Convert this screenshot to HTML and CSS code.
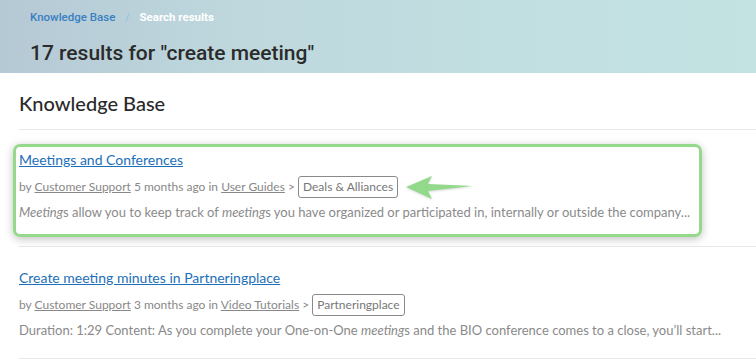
FILE: index.html
```html
<!DOCTYPE html>
<html lang="en">
<head>
  <meta charset="UTF-8" />
  <title>Search results</title>
  <link rel="stylesheet" href="styles.css">
</head>
<body>
  <header class="hero">
    <nav class="crumbs">
      <a href="#">Knowledge Base</a>
      <span class="sep">/</span>
      <span class="current">Search results</span>
    </nav>
    <h1>17 results for "create meeting"</h1>
  </header>

  <main class="content">
    <h2>Knowledge Base</h2>

    <section class="result">
      <div class="marked">
        <a class="title" href="#">Meetings and Conferences</a>
        <div class="meta">
          by <a href="#">Customer Support</a> 5 months ago in <a href="#">User Guides</a> &gt;
          <span class="tag">Deals &amp; Alliances</span>
          <svg class="arrow" width="72" height="26" viewBox="0 0 72 26">
            <path d="M1 12 L27 1 L23 9 L68 11 L23 16 L27 24 Z" fill="#93d98b" />
          </svg>
        </div>
        <p class="excerpt"><em>Meeting</em>s allow you to keep track of <em>meeting</em>s you have organized or participated in, internally or outside the company...</p>
      </div>
    </section>

    <section class="result">
      <a class="title" href="#">Create meeting minutes in Partneringplace</a>
      <div class="meta">
        by <a href="#">Customer Support</a> 3 months ago in <a href="#">Video Tutorials</a> &gt;
        <span class="tag">Partneringplace</span>
      </div>
      <p class="excerpt">Duration: 1:29 Content: As you complete your One-on-One <em>meeting</em>s and the BIO conference comes to a close, you’ll start...</p>
    </section>
  </main>
</body>
</html>
```

FILE: styles.css
```css
* {
  box-sizing: border-box;
}

body {
  margin: 0;
  font-family: Lato, sans-serif;
  background: #fff;
  color: #333;
}

/* Header */
.hero {
  height: 73px;
  padding: 10px 30px 0;
  background: linear-gradient(90deg, #b5c9d5 0%, #bfd9de 35%, #c3e3e3 100%);
}

.crumbs {
  font-family: Roboto, sans-serif;
  font-size: 11.5px;
  font-weight: 500;
  line-height: 14px;
}

.crumbs a {
  color: #3a7fc1;
  text-decoration: none;
}

.crumbs .sep {
  color: #94c3dd;
  margin: 0 7px;
}

.crumbs .current {
  color: #fff;
  font-weight: 700;
}

.hero h1 {
  margin: 16px 0 0;
  font-family: Roboto, sans-serif;
  font-size: 21px;
  font-weight: 500;
  line-height: 26px;
  color: #2b2b2b;
}

/* Content */
.content {
  padding: 0 0 0 19px;
}

.content h2 {
  margin: 0;
  padding: 18px 0 13px;
  font-size: 20px;
  font-weight: 500;
  line-height: 25px;
  color: #2a2a2a;
  border-bottom: 1px solid #e8e8e8;
}

.result {
  position: relative;
  padding: 21px 0 19px;
  border-bottom: 1px solid #e8e8e8;
}

.marked {
  width: fit-content;
  margin: -7px 0 -10px -6px;
  padding: 3px 9px 13px 3px;
  border: 3px solid #95d98c;
  border-radius: 7px;
  box-shadow: 0 2px 8px rgba(0, 0, 0, 0.25);
}

.title {
  display: block;
  font-size: 14px;
  line-height: 19px;
  color: #1c6fb8;
}

.meta {
  position: relative;
  margin-top: 7px;
  font-size: 12px;
  line-height: 18px;
  color: #888;
}

.meta a {
  color: #888;
}

.tag {
  display: inline-block;
  padding: 1px 4px;
  border: 1px solid #8a8a8a;
  border-radius: 3px;
  line-height: 18px;
  color: #777;
}

.arrow {
  position: absolute;
  left: 386px;
  top: -1px;
  filter: drop-shadow(0 1px 1px rgba(0, 0, 0, 0.15));
}

.excerpt {
  margin: 6px 0 0;
  font-size: 13px;
  line-height: 17px;
  color: #8a8a8a;
}

.excerpt em {
  font-style: italic;
}
```
